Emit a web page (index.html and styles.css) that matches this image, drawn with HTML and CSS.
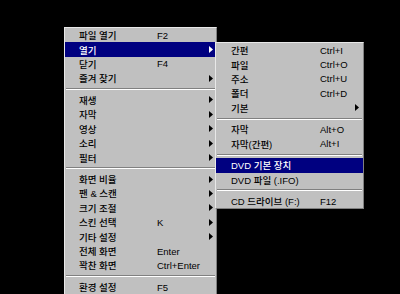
FILE: index.html
```html
<!DOCTYPE html>
<html lang="ko">

<head>
    <meta charset="UTF-8">
    <meta name="viewport" content="width=device-width">

    <title>플레이어 메뉴</title>

    <link rel="stylesheet" href="styles.css">

</head>

<body>
    <div class="menu main-menu">
        <div class="item"><span class="label">파일 열기</span><span class="key">F2</span></div>
        <div class="item selected"><span class="label">열기</span><span class="key"></span><svg class="arrow" viewBox="0 0 4 7"><polygon points="0,0 4,3.5 0,7"/></svg></div>
        <div class="item"><span class="label">닫기</span><span class="key">F4</span></div>
        <div class="item"><span class="label">즐겨 찾기</span><span class="key"></span><svg class="arrow" viewBox="0 0 4 7"><polygon points="0,0 4,3.5 0,7"/></svg></div>
        <div class="sep"></div>
        <div class="item"><span class="label">재생</span><span class="key"></span><svg class="arrow" viewBox="0 0 4 7"><polygon points="0,0 4,3.5 0,7"/></svg></div>
        <div class="item"><span class="label">자막</span><span class="key"></span><svg class="arrow" viewBox="0 0 4 7"><polygon points="0,0 4,3.5 0,7"/></svg></div>
        <div class="item"><span class="label">영상</span><span class="key"></span><svg class="arrow" viewBox="0 0 4 7"><polygon points="0,0 4,3.5 0,7"/></svg></div>
        <div class="item"><span class="label">소리</span><span class="key"></span><svg class="arrow" viewBox="0 0 4 7"><polygon points="0,0 4,3.5 0,7"/></svg></div>
        <div class="item"><span class="label">필터</span><span class="key"></span><svg class="arrow" viewBox="0 0 4 7"><polygon points="0,0 4,3.5 0,7"/></svg></div>
        <div class="sep"></div>
        <div class="item"><span class="label">화면 비율</span><span class="key"></span><svg class="arrow" viewBox="0 0 4 7"><polygon points="0,0 4,3.5 0,7"/></svg></div>
        <div class="item"><span class="label">팬 &amp; 스캔</span><span class="key"></span><svg class="arrow" viewBox="0 0 4 7"><polygon points="0,0 4,3.5 0,7"/></svg></div>
        <div class="item"><span class="label">크기 조절</span><span class="key"></span><svg class="arrow" viewBox="0 0 4 7"><polygon points="0,0 4,3.5 0,7"/></svg></div>
        <div class="item"><span class="label">스킨 선택</span><span class="key">K</span><svg class="arrow" viewBox="0 0 4 7"><polygon points="0,0 4,3.5 0,7"/></svg></div>
        <div class="item"><span class="label">기타 설정</span><span class="key"></span><svg class="arrow" viewBox="0 0 4 7"><polygon points="0,0 4,3.5 0,7"/></svg></div>
        <div class="item"><span class="label">전체 화면</span><span class="key">Enter</span></div>
        <div class="item"><span class="label">꽉찬 화면</span><span class="key">Ctrl+Enter</span></div>
        <div class="sep"></div>
        <div class="item"><span class="label">환경 설정</span><span class="key">F5</span></div>

        <!-- 열기 submenu -->
        <div class="menu sub-menu">
            <div class="item"><span class="label">간편</span><span class="key">Ctrl+I</span></div>
            <div class="item"><span class="label">파일</span><span class="key">Ctrl+O</span></div>
            <div class="item"><span class="label">주소</span><span class="key">Ctrl+U</span></div>
            <div class="item"><span class="label">폴더</span><span class="key">Ctrl+D</span></div>
            <div class="item"><span class="label">기본</span><span class="key"></span><svg class="arrow" viewBox="0 0 4 7"><polygon points="0,0 4,3.5 0,7"/></svg></div>
            <div class="sep"></div>
            <div class="item"><span class="label">자막</span><span class="key">Alt+O</span></div>
            <div class="item"><span class="label">자막(간편)</span><span class="key">Alt+I</span></div>
            <div class="sep"></div>
            <div class="item selected"><span class="label wide">DVD 기본 장치</span></div>
            <div class="item"><span class="label wide">DVD 파일 (.IFO)</span></div>
            <div class="sep"></div>
            <div class="item"><span class="label">CD 드라이브 (F:)</span><span class="key">F12</span></div>
        </div>
    </div>
</body>

</html>
```

FILE: styles.css
```css
html,
body {
    margin: 0;
    background-color: #000;
}

body {
    height: 294px;
    overflow: hidden;
    box-sizing: border-box;
    padding: 27px 0 0 64px;
    font-family: "Liberation Sans", "Noto Sans CJK KR", sans-serif;
    font-size: 9.5px;
    font-weight: 500;
}

.menu {
    background-color: #c0c0c0;
    border: 1px solid;
    border-color: #e8e8e8 #808080 #808080 #e8e8e8;
}

.main-menu {
    position: relative;
    width: 153px;
    box-sizing: border-box;
}

.sub-menu {
    position: absolute;
    left: 150px;
    top: 14px;
    width: 149px;
    box-sizing: border-box;
}

.item {
    display: flex;
    align-items: center;
    height: 14.4px;
    padding-left: 14px;
    color: #000;
    white-space: nowrap;
}

.sub-menu .item {
    padding-left: 15px;
}

.label {
    width: 78px;
}

.sub-menu .label {
    width: 89px;
}

.sub-menu .label.wide {
    width: auto;
}

.key {
    flex: 1;
}

.arrow {
    width: 4px;
    height: 7px;
    margin-right: 3px;
    fill: currentColor;
}

.sub-menu .arrow {
    margin-right: 4px;
}

.selected {
    background-color: #000080;
    color: #fff;
}

.sep {
    height: 7.2px;
    display: flex;
    align-items: center;
    padding: 0 1px;
}

.sep::before {
    content: "";
    flex: 1;
    border-top: 1px solid #808080;
    border-bottom: 1px solid #fff;
}
```
